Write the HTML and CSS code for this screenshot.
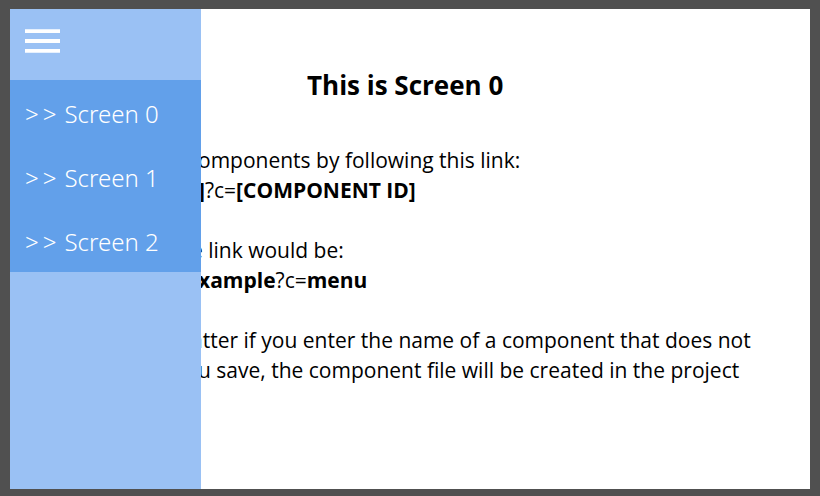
FILE: index.html
```html
<!DOCTYPE html>
<html lang="en">
<head>
<meta charset="utf-8">
<meta name="viewport" content="width=device-width, initial-scale=1">
<title>Screen 0</title>
<link rel="stylesheet" href="styles.css">
</head>
<body>
<div class="screen">
  <main class="content">
    <h1 class="title">This is Screen 0</h1>
    <p class="text">omponents by following this link:<br><b>]</b>?c=<b>[COMPONENT ID]</b></p>
    <p class="text"><span class="tucked">e link would be:</span><br><b>xample</b>?c=<b>menu</b></p>
    <p class="text"><span class="tucked">atter if you enter the name of a component that does not</span><br>u save, the component file will be created in the project</p>
  </main>
  <aside class="drawer">
    <button class="toggle" type="button" aria-label="Menu">
      <svg width="35" height="24" viewBox="0 0 35 24" fill="#fff" aria-hidden="true">
        <path d="M0 .3h35v3.7H0zM0 10h35v4H0zM0 20h35v3.7H0z"/>
      </svg>
    </button>
    <nav class="menu">
      <a class="item" href="#screen0"><span class="arrows"><span>&gt;</span><span>&gt;</span></span> Screen 0</a>
      <a class="item" href="#screen1"><span class="arrows"><span>&gt;</span><span>&gt;</span></span> Screen 1</a>
      <a class="item" href="#screen2"><span class="arrows"><span>&gt;</span><span>&gt;</span></span> Screen 2</a>
    </nav>
  </aside>
</div>
</body>
</html>
```
FILE: styles.css
```css
* {
  box-sizing: border-box;
}

body {
  margin: 0;
  min-height: 100vh;
  display: flex;
  padding: 9px 10px 7px;
  background: #505050;
  color: #000;
  font-family: "Open Sans", "Noto Sans", sans-serif;
}

.screen {
  position: relative;
  flex: 1;
  min-width: 0;
  overflow: hidden;
  background: #fff;
}

.content {
  padding: 56px 0 0 188px;
}

.title {
  margin: 0 0 40px;
  padding-left: 109px;
  font-size: 26px;
  line-height: 40px;
  font-weight: 700;
}

.text {
  margin: 0 0 30px;
  font-size: 21px;
  line-height: 30px;
  white-space: nowrap;
}

.tucked {
  margin-left: -7px;
}

.drawer {
  position: absolute;
  top: 0;
  bottom: 0;
  left: 0;
  width: 191px;
  background: #9ac1f4;
}

.toggle {
  display: block;
  height: 71px;
  padding: 20px 15px 27px;
  border: 0;
  background: none;
}

.toggle svg {
  display: block;
}

.menu {
  background: #62a0ea;
}

.item {
  display: flex;
  align-items: center;
  gap: 8px;
  height: 64px;
  padding: 2px 15px 0;
  color: #fff;
  font-family: "Noto Sans", "Open Sans", sans-serif;
  font-size: 24px;
  font-weight: 300;
  text-decoration: none;
  white-space: nowrap;
}

.arrows {
  display: flex;
  gap: 4px;
}
```
